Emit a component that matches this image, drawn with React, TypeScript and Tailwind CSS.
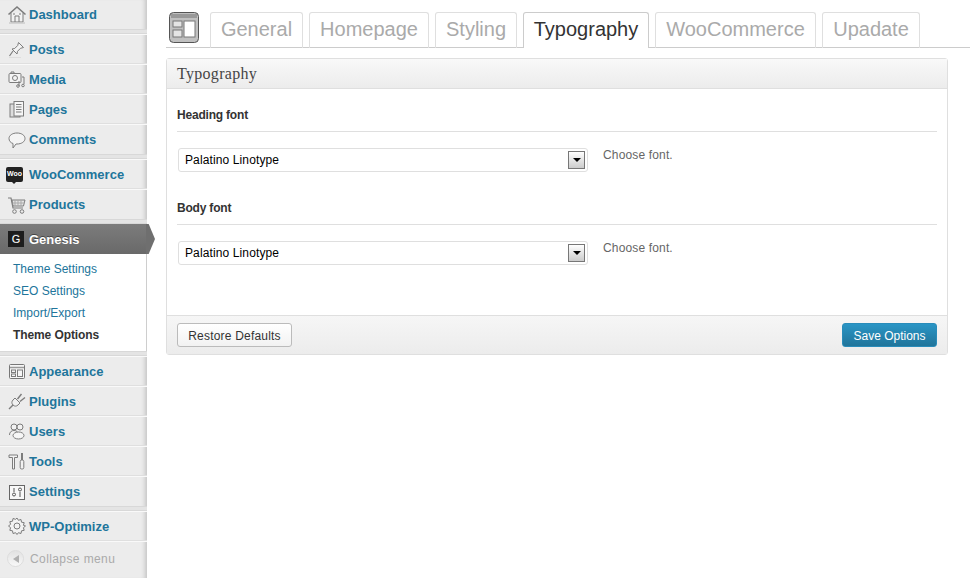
import React from "react";

const G = "#7c7c7c";

function Ico({ children }: { children: React.ReactNode }) {
  return (
    <svg width="20" height="20" viewBox="0 0 20 20" fill="none" stroke={G} strokeWidth="1" className="shrink-0">
      {children}
    </svg>
  );
}

const icons: Record<string, React.ReactNode> = {
  Dashboard: (
    <Ico>
      <path d="M1.5 10.5 10 3l8.5 7.5" strokeWidth="1.6" />
      <path d="M4 9v9h12V9" fill="#f2f2f2" />
      <path d="M8 18v-6h4v6M6 10h2M12 10h2" />
      <path d="M2 19h16" stroke="#ccc" strokeWidth="1.5" />
    </Ico>
  ),
  Posts: (
    <Ico>
      <path d="M11.5 3.5l5 5-3 .8-3 3-.5 2.7-5-5 2.7-.5 3-3z" fill="#f4f4f4" />
      <path d="M6 12l-3.5 5" strokeWidth="1.2" />
      <path d="M2 18.5h12" stroke="#ddd" />
    </Ico>
  ),
  Media: (
    <Ico>
      <rect x="2" y="4.5" width="12" height="9" rx="1" fill="#f4f4f4" />
      <path d="M4 4.5V3h3v1.500" />
      <circle cx="8" cy="9" r="2.500" />
      <path d="M15 8h2v7M12 12v5" />
      <circle cx="11" cy="17" r="1.300" />
      <circle cx="16" cy="16.500" r="1.300" />
    </Ico>
  ),
  Pages: (
    <Ico>
      <rect x="3" y="5" width="10" height="13" fill="#ddd" />
      <rect x="7" y="2.500" width="9.500" height="14.500" fill="#f6f6f6" />
      <path d="M9 5.500h5.500M9 8h5.500M9 10.500h5.500M9 13h5.500" />
    </Ico>
  ),
  Comments: (
    <Ico>
      <path d="M10 3c4.500 0 8 2.300 8 5.500S14.500 14 10 14l-1 0-3 4v-4.500C3.500 12.800 2 10.800 2 8.500 2 5.300 5.500 3 10 3z" fill="#f4f4f4" />
    </Ico>
  ),
  Products: (
    <Ico>
      <path d="M1 3h3l2 10h10" strokeWidth="1.2" />
      <path d="M5 5h13l-1.500 6H6z" fill="#e4e4e4" />
      <path d="M8 5v6M11 5v6M14 5v6M5.500 8h12" stroke="#aaa" />
      <circle cx="7.500" cy="16.500" r="1.800" />
      <circle cx="15" cy="16.500" r="1.800" />
    </Ico>
  ),
  Appearance: (
    <Ico>
      <rect x="2.500" y="3.500" width="15" height="14" rx="1" fill="#f6f6f6" stroke="#777" />
      <path d="M3 6.500h14" stroke="#999" strokeWidth="1.500" />
      <rect x="4.500" y="9" width="4" height="2.500" />
      <rect x="4.500" y="13" width="4" height="2.500" />
      <rect x="10.500" y="9" width="5" height="6.500" />
    </Ico>
  ),
  Plugins: (
    <Ico>
      <path d="M8 7l5 5-2 2c-1.500 1.500-3.500 1.500-5 0s-1.500-3.500 0-5z" fill="#f0f0f0" />
      <path d="M10.500 8l4-5M13 10.500l5-4M6 14l-4 4" strokeWidth="1.400" />
    </Ico>
  ),
  Users: (
    <Ico>
      <circle cx="7" cy="6" r="3" fill="#f2f2f2" />
      <circle cx="13" cy="6" r="3" fill="#f2f2f2" />
      <path d="M2.500 14c0-3 2-4.500 4.500-4.500 1.500 0 3 .6 3.800 2" fill="#f2f2f2" />
      <ellipse cx="11.500" cy="14.500" rx="5.500" ry="3.500" fill="#f6f6f6" />
    </Ico>
  ),
  Tools: (
    <Ico>
      <path d="M2 4h8.500v2.500H7.500V18H5.500V6.500H2z" fill="#f2f2f2" />
      <path d="M15 2v7" strokeWidth="2" />
      <rect x="13.200" y="9" width="3.600" height="9" rx="1.500" fill="#f2f2f2" />
    </Ico>
  ),
  Settings: (
    <Ico>
      <rect x="2.500" y="3.500" width="15" height="14" fill="#f8f8f8" stroke="#666" />
      <path d="M7 6v4M13 10v5" stroke="#555" />
      <circle cx="7" cy="12.500" r="1.500" stroke="#555" />
      <circle cx="13" cy="7.500" r="1.500" stroke="#555" />
    </Ico>
  ),
  "WP-Optimize": (
    <Ico>
      <path d="M10 2l1.400 2.300 2.600-.8.500 2.700 2.700.5-.8 2.600L18.500 10l-2.100 1.700.8 2.600-2.700.5-.5 2.700-2.600-.8L10 18.500l-1.400-1.800-2.600.8-.5-2.700-2.700-.5.8-2.600L1.500 10l2.100-1.700-.8-2.600 2.700-.5.500-2.700 2.600.8z" fill="#f2f2f2" />
      <circle cx="10" cy="10" r="3" />
    </Ico>
  ),
};

function MenuRow({ label, icon, first, last }: { label: string; icon?: React.ReactNode; first?: boolean; last?: boolean }) {
  return (
    <a
      className={`flex h-[30px] items-center gap-[2px] pl-[7px] text-[13px] font-bold text-[#21759b] ${first ? "" : "border-t border-t-[#f9f9f9]"} ${last ? "" : "border-b border-b-[#dfdfdf]"}`}
    >
      {icon ?? icons[label]}
      <span className="pt-[1px]">{label}</span>
    </a>
  );
}

function Sep() {
  return <div className="h-[5px] border-y border-y-[#d8d8d8] bg-[#e4e4e4]" />;
}

function Sidebar() {
  return (
    <aside className="relative flex h-[578px] w-[147px] shrink-0 flex-col bg-[#ececec] shadow-[inset_-5px_0_4px_-3px_#c4c4c4]">
      <div className="-mt-[1px]">
        <MenuRow label="Dashboard" first last />
      </div>
      <Sep />
      <MenuRow label="Posts" />
      <MenuRow label="Media" />
      <MenuRow label="Pages" />
      <MenuRow label="Comments" last />
      <Sep />
      <MenuRow
        label="WooCommerce"
        icon={
          <span className="relative ml-[-1px] mr-[4px] flex h-[15px] w-[17px] items-center justify-center rounded-[2px] bg-[#222] text-[7px] font-bold text-white">
            Woo
            <span className="absolute left-[6px] top-[15px] h-0 w-0 border-x-[2px] border-t-[2px] border-x-transparent border-t-[#222]" />
          </span>
        }
      />
      <MenuRow label="Products" last />
      <Sep />
      <div className="relative flex h-[30px] items-center gap-[5px] bg-linear-to-b from-[#7c7c7c] to-[#696969] pl-[8px] text-[13px] font-bold text-white [text-shadow:0_-1px_0_#444]">
        <span className="flex h-[16px] w-[16px] items-center justify-center bg-[#1d1d1d] text-[11px] font-normal">G</span>
        <span className="pt-[1px]">Genesis</span>
        <span className="absolute left-[146px] top-0 h-[30px] w-[9px] bg-[#6f6f6f] [clip-path:polygon(0_0,30%_0,100%_50%,30%_100%,0_100%)]" />
      </div>
      <div className="flex w-[146px] flex-col bg-white pb-[5px] pl-[13px] pt-[4px] text-[12px] text-[#21759b]">
        <span className="flex h-[22px] items-center">Theme Settings</span>
        <span className="flex h-[22px] items-center">SEO Settings</span>
        <span className="flex h-[22px] items-center">Import/Export</span>
        <span className="flex h-[22px] items-center font-bold tracking-[-0.1px] text-[#333]">Theme Options</span>
      </div>
      <Sep />
      <MenuRow label="Appearance" />
      <MenuRow label="Plugins" />
      <MenuRow label="Users" />
      <MenuRow label="Tools" />
      <MenuRow label="Settings" last />
      <Sep />
      <MenuRow label="WP-Optimize" />
      <div className="flex h-[34px] items-center gap-[6px] border-t border-t-[#f9f9f9] pl-[7px] text-[12px] text-[#aaa]">
        <span className="flex h-[17px] w-[17px] items-center justify-center rounded-full border border-[#ddd] bg-linear-to-b from-[#e2e2e2] to-[#f8f8f8]">
          <span className="h-0 w-0 border-y-[4px] border-r-[6px] border-y-transparent border-r-[#b0b0b0]" />
        </span>
        <span className="tracking-[0.4px]">Collapse menu</span>
      </div>
    </aside>
  );
}

function Tab({ label, active, w }: { label: string; active?: boolean; w: string }) {
  return (
    <div
      className={`-mb-[1px] flex h-[36px] items-center justify-center rounded-t-[3px] border border-b-0 pb-[3px] text-[20px] leading-none ${w} ${
        active ? "relative border-[#ccc] bg-white text-[#333]" : "border-[#dfdfdf] text-[#aaa]"
      }`}
    >
      {label}
    </div>
  );
}

function FontField({ title }: { title: string }) {
  return (
    <section>
      <h4 className="flex h-[33px] items-center border-b border-b-[#dfdfdf] pb-[1px] text-[12px] font-bold tracking-[-0.2px] text-[#333]">{title}</h4>
      <div className="mt-[16px] flex items-start">
        <div className="ml-[1px] flex h-[24px] w-[410px] items-center justify-between rounded-[3px] border border-[#dfdfdf] pl-[6px] pr-[2px] text-[12px] text-black">
          <span className="tracking-[0.12px]">Palatino Linotype</span>
          <span className="flex h-[18px] w-[17px] items-center justify-center border border-[#777] bg-linear-to-b from-white to-[#ccc]">
            <span className="h-0 w-0 border-x-[4px] border-t-[4px] border-x-transparent border-t-black" />
          </span>
        </div>
        <span className="ml-[15px] text-[12px] leading-[14px] tracking-[0.15px] text-[#666]">Choose font.</span>
      </div>
    </section>
  );
}

export default function App() {
  return (
    <div className="flex h-[578px] w-[970px] overflow-hidden bg-white font-['Liberation_Sans',Arial,sans-serif]">
      <Sidebar />
      <main className="flex-1 pl-[19px] pr-[22px]">
        <div className="-mr-[22px] flex h-[48px] items-end border-b border-b-[#ccc] pl-[3px]">
          <div className="mb-[4px] mr-[11px] shrink-0">
            <svg width="30" height="31" viewBox="0 0 30 31" fill="none">
              <rect x="0.500" y="0.500" width="29" height="30" rx="4" fill="#c0c0c0" stroke="#555" />
              <rect x="2" y="2" width="26" height="4" fill="#999" />
              <rect x="4" y="9" width="9" height="6" fill="#e4e4e4" stroke="#777" />
              <rect x="4" y="18" width="9" height="7" fill="#e4e4e4" stroke="#777" />
              <rect x="15" y="9" width="11" height="16" fill="#fff" stroke="#777" />
            </svg>
          </div>
          <div className="flex items-end gap-[6px]">
            <Tab label="General" w="w-[93px]" />
            <Tab label="Homepage" w="w-[120px]" />
            <Tab label="Styling" w="w-[82px]" />
            <Tab label="Typography" w="w-[126px]" active />
            <Tab label="WooCommerce" w="w-[161px]" />
            <Tab label="Upadate" w="w-[98px]" />
          </div>
        </div>

        <div className="mt-[10px] flex h-[297px] w-[782px] flex-col rounded-[3px] border border-[#dfdfdf]">
          <div className="flex h-[30px] items-center border-b border-b-[#dfdfdf] bg-linear-to-b from-[#f9f9f9] to-[#ececec] pl-[10px] font-['Liberation_Serif',Georgia,serif] text-[16px] tracking-[0.3px] text-[#464646]">
            Typography
          </div>
          <div className="flex-1 px-[10px] pt-[10px]">
            <FontField title="Heading font" />
            <div className="h-[20px]" />
            <FontField title="Body font" />
          </div>
          <div className="flex h-[39px] items-center justify-between border-t border-t-[#dfdfdf] bg-linear-to-b from-[#f6f6f6] to-[#ececec] px-[10px]">
            <button className="h-[24px] w-[115px] rounded-[3px] border border-[#bbb] bg-linear-to-b from-white to-[#f2f2f2] pt-[1px] text-[12px] tracking-[0.2px] text-[#333]">
              Restore Defaults
            </button>
            <button className="h-[24px] w-[95px] rounded-[3px] border border-[#298cba] bg-linear-to-b from-[#2a95c5] to-[#21759b] pt-[1px] text-[12px] text-white">
              Save Options
            </button>
          </div>
        </div>
      </main>
    </div>
  );
}
